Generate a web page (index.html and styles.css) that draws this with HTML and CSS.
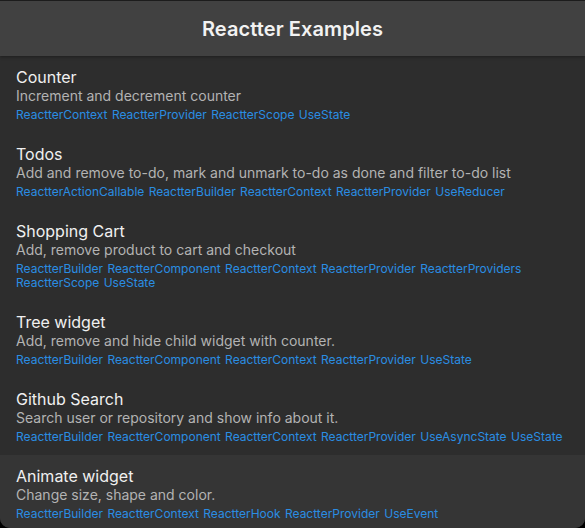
FILE: index.html
```html
<!DOCTYPE html>
<html lang="en">
<head>
<meta charset="utf-8">
<title>Reactter Examples</title>
<link rel="stylesheet" href="styles.css">
</head>
<body>
<div class="window">
  <header class="appbar">
    <h1 class="appbar-title">Reactter Examples</h1>
  </header>
  <ul class="examples">
    <li class="example">
      <div class="example-title">Counter</div>
      <div class="example-desc">Increment and decrement counter</div>
      <div class="tags"><span>ReactterContext</span> <span>ReactterProvider</span> <span>ReactterScope</span> <span>UseState</span></div>
    </li>
    <li class="example">
      <div class="example-title">Todos</div>
      <div class="example-desc">Add and remove to-do, mark and unmark to-do as done and filter to-do list</div>
      <div class="tags"><span>ReactterActionCallable</span> <span>ReactterBuilder</span> <span>ReactterContext</span> <span>ReactterProvider</span> <span>UseReducer</span></div>
    </li>
    <li class="example">
      <div class="example-title">Shopping Cart</div>
      <div class="example-desc">Add, remove product to cart and checkout</div>
      <div class="tags"><span>ReactterBuilder</span> <span>ReactterComponent</span> <span>ReactterContext</span> <span>ReactterProvider</span> <span>ReactterProviders</span> <span>ReactterScope</span> <span>UseState</span></div>
    </li>
    <li class="example">
      <div class="example-title">Tree widget</div>
      <div class="example-desc">Add, remove and hide child widget with counter.</div>
      <div class="tags"><span>ReactterBuilder</span> <span>ReactterComponent</span> <span>ReactterContext</span> <span>ReactterProvider</span> <span>UseState</span></div>
    </li>
    <li class="example">
      <div class="example-title">Github Search</div>
      <div class="example-desc">Search user or repository and show info about it.</div>
      <div class="tags"><span>ReactterBuilder</span> <span>ReactterComponent</span> <span>ReactterContext</span> <span>ReactterProvider</span> <span>UseAsyncState</span> <span>UseState</span></div>
    </li>
    <li class="example example-hover">
      <div class="example-title">Animate widget</div>
      <div class="example-desc">Change size, shape and color.</div>
      <div class="tags"><span>ReactterBuilder</span> <span>ReactterContext</span> <span>ReactterHook</span> <span>ReactterProvider</span> <span>UseEvent</span></div>
    </li>
  </ul>
</div>
</body>
</html>
```
FILE: styles.css
```css
html, body {
  margin: 0;
  padding: 0;
  background: #000;
  height: 100%;
}
body {
  font-family: Inter, "Noto Sans", "Liberation Sans", sans-serif;
  -webkit-font-smoothing: antialiased;
}
.window {
  width: 585px;
  height: 528px;
  background: #2d2d2d;
  border-top: 1px solid #1c1c1c;
  border-radius: 0 0 10px 10px;
  overflow: hidden;
  box-sizing: border-box;
  display: flex;
  flex-direction: column;
}
.appbar {
  height: 55px;
  flex: none;
  background: #414141;
  display: flex;
  align-items: center;
  justify-content: center;
  box-shadow: 0 1px 3px rgba(0, 0, 0, 0.35);
  position: relative;
  z-index: 1;
}
.appbar-title {
  margin: 0;
  font-size: 20px;
  font-weight: 600;
  color: #f2f2f2;
  letter-spacing: 0.1px;
}
.examples {
  list-style: none;
  margin: 0;
  padding: 0;
}
.example {
  padding: 11px 16px 11px;
}
.example-hover {
  background: #353535;
}
.example-title {
  font-size: 16px;
  line-height: 20px;
  color: #f0f0f0;
}
.example-desc {
  font-size: 14px;
  line-height: 18px;
  color: #b3b3b3;
}
.tags {
  font-size: 12px;
  line-height: 14px;
  color: #2a8de3;
  margin-top: 3px;
  word-spacing: 1px;
}
```
